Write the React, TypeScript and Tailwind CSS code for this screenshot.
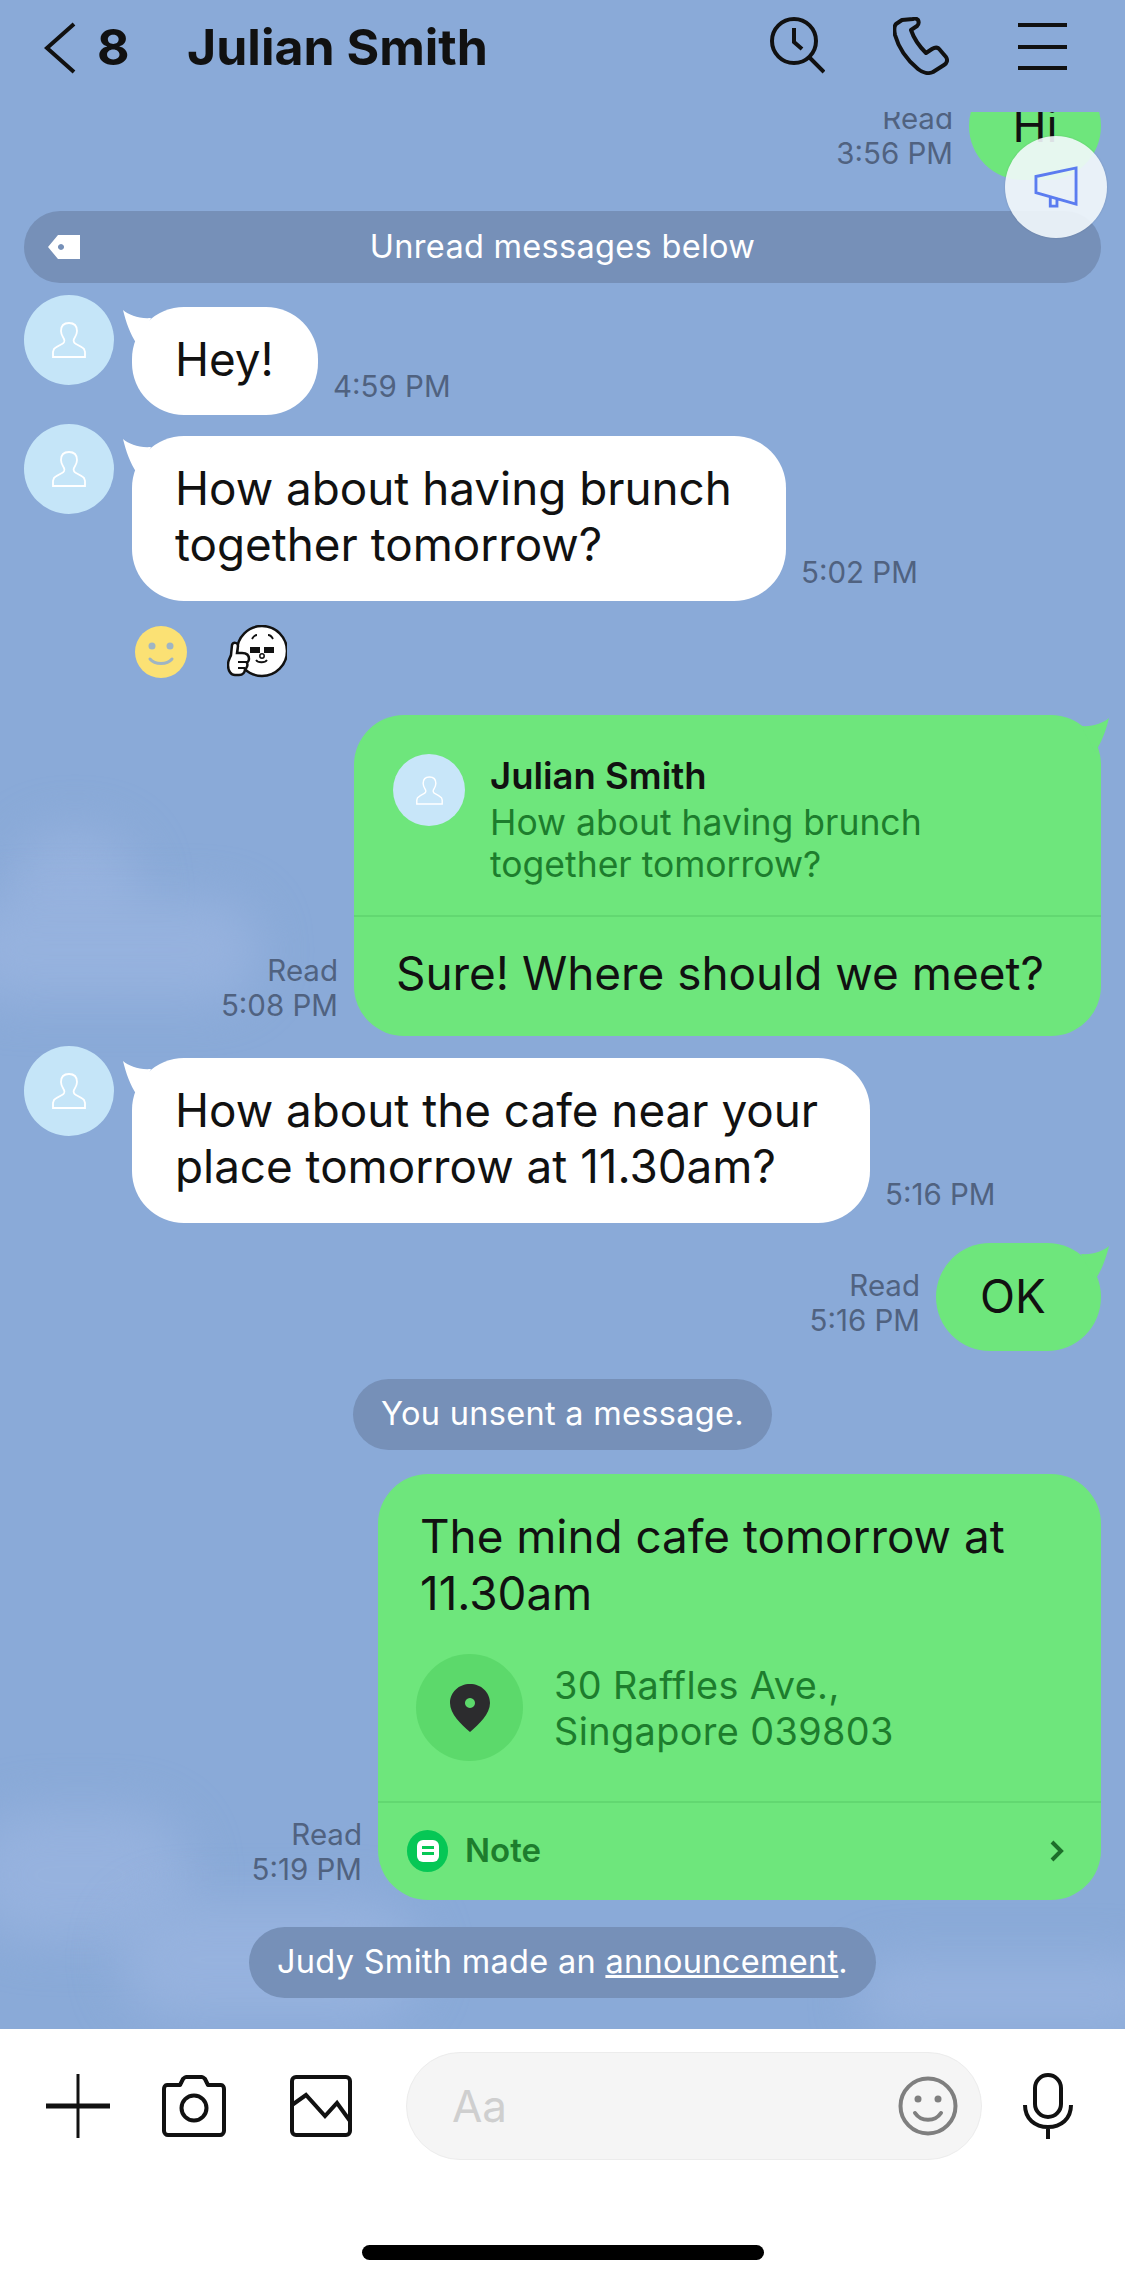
const Avatar = ({ small }: { small?: boolean }) => (
  <div className={small ? "w-[72px] h-[72px] rounded-full bg-[#c8e6f9] flex items-center justify-center shrink-0" : "w-[90px] h-[90px] rounded-full bg-[#c5e5f8] flex items-center justify-center shrink-0"}>
    <svg viewBox="0 0 34 36" className={small ? "w-[27px] h-[29px]" : "w-[34px] h-[36px]"} fill="none" stroke="#fff" strokeWidth="1.800">
      <path d="M17 1c-5 0-8 3-8 8 0 4 2 6 3 8 1 2 0 4-2 5-3 1.500-6 3-8 5l-1 3v5h32v-5l-1-3c-2-2-5-3.500-8-5-2-1-3-3-2-5 1-2 3-4 3-8 0-5-3-8-8-8z" />
    </svg>
  </div>
)

const TailLeft = () => (
  <svg viewBox="0 0 30 34" className="absolute left-[-9px] top-[3px] w-[30px] h-[34px]" fill="#fff">
    <path d="M0 0 C6 5 16 9 28 8 L14 34 C7 24 3 12 0 0z" />
  </svg>
)

const TailRight = () => (
  <svg viewBox="0 0 30 34" className="absolute right-[-8px] top-[3px] w-[30px] h-[34px]" fill="#6ee67c">
    <path d="M30 0 C24 5 14 9 2 8 L16 34 C23 24 27 12 30 0z" />
  </svg>
)

const Incoming = ({ lines, time, width, height, className }: { lines: string[]; time: string; width: string; height: string; className: string }) => (
  <div className={`flex items-start pl-[24px] ${className}`}>
    <Avatar />
    <div className={`relative mt-[12px] ml-[18px] bg-white rounded-[52px] pl-[43px] pb-[3px] flex flex-col justify-center text-[45.800px] leading-[56px] text-[#111] ${width} ${height}`}>
      <TailLeft />
      {lines.map((l) => (
        <div key={l} className="whitespace-nowrap">{l}</div>
      ))}
    </div>
    <span className="ml-[15px] mb-[12px] self-end text-[29.500px] leading-[34px] text-[#506280] whitespace-nowrap">{time}</span>
  </div>
)

const ReadTime = ({ time }: { time: string }) => (
  <div className="text-right text-[29.500px] leading-[35px] text-[#506280] mr-[16px] whitespace-nowrap">
    <div>Read</div>
    <div>{time}</div>
  </div>
)

const SystemPill = ({ children, className }: { children: React.ReactNode; className: string }) => (
  <div className={`flex justify-center ${className}`}>
    <div className="h-[71px] px-[28px] rounded-full bg-[#7690b8] flex items-center text-[32.500px] tracking-[0.3px] text-white whitespace-nowrap">
      {children}
    </div>
  </div>
)

const Sticker = () => (
  <svg viewBox="0 0 60 54" className="w-[60px] h-[54px] ml-[40px]">
    <circle cx="35" cy="26" r="25" fill="#fff" stroke="#111" strokeWidth="2.500" />
    <path d="M5 20c1-3 6-3 6 1l-1 7h5c4 0 7 2 7 6 0 2-1 3-2 4 1 2 0 5-2 6 0 3-2 6-6 6H8c-4 0-7-4-7-10 0-5 2-7 3-10z" fill="#fff" stroke="#111" strokeWidth="2.500" />
    <path d="M11 37h9M11 43h7" stroke="#111" strokeWidth="1.800" />
    <rect x="23" y="22" width="10" height="6" fill="#111" />
    <rect x="37" y="22" width="10" height="6" fill="#111" />
    <path d="M25 14c1-2 3-4 5-4M41 10c2 0 4 2 5 4" stroke="#111" strokeWidth="1.800" fill="none" />
    <path d="M29 35c2 3 9 3 11 0" stroke="#111" strokeWidth="1.800" fill="none" />
    <circle cx="35" cy="31" r="2.200" fill="none" stroke="#111" strokeWidth="1.500" />
  </svg>
)

const Cloud = ({ className }: { className: string }) => (
  <div className={`absolute rounded-full bg-[#96b2de] blur-[24px] ${className}`} />
)

export default function App() {
  return (
    <div className="relative w-[1125px] h-[2284px] bg-[#8aaad8] overflow-hidden [font-family:Inter,sans-serif] flex flex-col">
      <Cloud className="left-[10px] top-[830px] w-[130px] h-[120px]" />
      <Cloud className="left-[-40px] top-[900px] w-[300px] h-[100px]" />
      <Cloud className="left-[-30px] top-[1810px] w-[220px] h-[130px]" />
      <Cloud className="left-[120px] top-[1900px] w-[300px] h-[120px]" />
      <Cloud className="left-[860px] top-[1960px] w-[300px] h-[70px]" />

      {/* header */}
      <div className="relative h-[112px] shrink-0 flex items-center text-[#111]">
        <svg viewBox="0 0 32 52" className="absolute left-[44px] top-[22px] w-[32px] h-[52px]" fill="none" stroke="#111" strokeWidth="4">
          <path d="M30 2 3 26l27 24" />
        </svg>
        <span className="absolute left-[97px] top-[18px] text-[50px] leading-[58px] font-bold">8</span>
        <span className="absolute left-[187px] top-[18px] text-[50px] leading-[58px] font-bold">Julian Smith</span>
        <svg viewBox="0 0 56 58" className="absolute left-[769px] top-[16px] w-[56px] h-[58px]" fill="none" stroke="#111" strokeWidth="4">
          <circle cx="25" cy="25" r="22" />
          <path d="M25 12v14l8 7M40 41l15 15" />
        </svg>
        <svg viewBox="0 0 58 58" className="absolute left-[893px] top-[17px] w-[58px] h-[58px]" fill="none" stroke="#111" strokeWidth="4" strokeLinejoin="round">
          <path d="M9 3 3 7c-2 2-2 6-1 11 4 14 12 25 23 34 5 4 11 5 15 3l11-7c3-2 4-5 2-8l-6-7c-2-3-5-3-8-1l-6 4C27 30 21 22 18 13l6-4c2-2 2-4 1-6-1-1-3-2-5-1z" />
        </svg>
        <div className="absolute left-[1018px] top-[23px] w-[49px] h-[47px] flex flex-col justify-between">
          <div className="h-[4px] bg-[#111]" />
          <div className="h-[4px] bg-[#111]" />
          <div className="h-[4px] bg-[#111]" />
        </div>
      </div>

      {/* messages */}
      <div className="relative h-[1917px] shrink-0 overflow-hidden">
        <div className="flex justify-end items-end pr-[24px] mt-[-40px]">
          <div className="mb-[9px]"><ReadTime time="3:56 PM" /></div>
          <div className="relative h-[108px] w-[132px] rounded-[54px] bg-[#6ee67c] flex items-center justify-center text-[45.800px] text-[#111]">Hi</div>
        </div>

        <div className="relative mt-[31px] mx-[24px] h-[72px] rounded-full bg-[#7690b8] flex items-center justify-center text-[32.500px] tracking-[0.3px] text-white">
          <svg viewBox="0 0 32 24" className="absolute left-[24px] top-[24px] w-[32px] h-[24px]">
            <path fillRule="evenodd" d="M10 0h22v24H10L0 12zM13 9a3 3 0 1 0 .01 0z" fill="#fff" />
          </svg>
          Unread messages below
        </div>

        <Incoming className="mt-[12px]" lines={["Hey!"]} time="4:59 PM" width="w-[186px]" height="h-[108px]" />
        <Incoming className="mt-[9px]" lines={["How about having brunch", "together tomorrow?"]} time="5:02 PM" width="w-[654px]" height="h-[165px]" />

        <div className="flex items-center pl-[135px] mt-[24px]">
          <svg viewBox="0 0 52 52" className="w-[52px] h-[52px]">
            <circle cx="26" cy="26" r="26" fill="#fbe174" />
            <circle cx="17" cy="20" r="3.500" fill="#9fb5c4" />
            <circle cx="35" cy="20" r="3.500" fill="#9fb5c4" />
            <path d="M15 33c5 6 17 6 22 0" fill="none" stroke="#9fb5c4" strokeWidth="3" strokeLinecap="round" />
          </svg>
          <Sticker />
        </div>

        {/* reply */}
        <div className="flex justify-end items-end pr-[24px] mt-[36px]">
          <div className="mb-[13px]"><ReadTime time="5:08 PM" /></div>
          <div className="relative w-[747px] h-[321px] rounded-[50px] bg-[#6ee67c] flex flex-col">
            <TailRight />
            <div className="h-[202px] flex pl-[39px] pt-[39px] border-b-2 border-[#62d871]">
              <Avatar small />
              <div className="ml-[25px]">
                <div className="text-[36.500px] leading-[44px] font-semibold text-[#111]">Julian Smith</div>
                <div className="mt-[4px] text-[35.500px] leading-[42px] text-[#1d7d2d]">How about having brunch<br />together tomorrow?</div>
              </div>
            </div>
            <div className="flex-1 flex items-center pl-[42px] pb-[5px] text-[45.900px] text-[#111] whitespace-nowrap">Sure! Where should we meet?</div>
          </div>
        </div>

        <Incoming className="mt-[10px]" lines={["How about the cafe near your", "place tomorrow at 11.30am?"]} time="5:16 PM" width="w-[738px]" height="h-[165px]" />

        <div className="flex justify-end items-end pr-[24px] mt-[20px]">
          <div className="mb-[13px]"><ReadTime time="5:16 PM" /></div>
          <div className="relative w-[165px] h-[108px] rounded-[54px] bg-[#6ee67c] flex items-center justify-center pr-[11px] text-[45.800px] text-[#111]">
            <TailRight />
            OK
          </div>
        </div>

        <SystemPill className="mt-[28px]">You unsent a message.</SystemPill>

        {/* note card */}
        <div className="flex justify-end items-end pr-[24px] mt-[24px]">
          <div className="mb-[13px]"><ReadTime time="5:19 PM" /></div>
          <div className="w-[723px] h-[426px] rounded-[50px] bg-[#6ee67c] flex flex-col">
            <div className="h-[329px] border-b-2 border-[#62d871]">
              <div className="pl-[42px] pt-[34px] text-[45.800px] leading-[57px] text-[#111]">The mind cafe tomorrow at<br />11.30am</div>
              <div className="flex items-center pl-[38px] mt-[32px]">
                <div className="w-[107px] h-[107px] rounded-full bg-[#5cd96b] flex items-center justify-center">
                  <svg viewBox="0 0 40 48" className="w-[40px] h-[48px]">
                    <path fillRule="evenodd" d="M20 0C9 0 0 8 0 19c0 11 11 21 20 29 9-8 20-18 20-29C40 8 31 0 20 0zm0 14a5 5 0 1 1-.01 0z" fill="#2c2c2e" />
                  </svg>
                </div>
                <div className="ml-[31px] text-[37.800px] leading-[46px] tracking-[0.4px] text-[#1d7d2d]">30 Raffles Ave.,<br />Singapore 039803</div>
              </div>
            </div>
            <div className="flex-1 flex items-center pl-[29px] pr-[36px] pb-[2px]">
              <div className="w-[41px] h-[42px] rounded-full bg-[#06c755] flex items-center justify-center">
                <div className="w-[22px] h-[22px] rounded-[6px] bg-white flex flex-col items-center justify-center gap-[3px]">
                  <div className="w-[12px] h-[3px] bg-[#06c755]" />
                  <div className="w-[12px] h-[3px] bg-[#06c755]" />
                </div>
              </div>
              <span className="ml-[17px] text-[33px] font-semibold text-[#1d7d2d]">Note</span>
              <svg viewBox="0 0 16 22" className="ml-auto w-[16px] h-[22px]" fill="none" stroke="#1d6e2a" strokeWidth="4">
                <path d="m3 2 9 9-9 9" />
              </svg>
            </div>
          </div>
        </div>

        <SystemPill className="mt-[27px]">
          <span>Judy Smith made an <span className="underline">announcement</span>.</span>
        </SystemPill>

        {/* announcement button */}
        <div className="absolute right-[18px] top-[24px] w-[102px] h-[102px] rounded-full bg-[#f3f8fc]/90 flex items-center justify-center shadow-[0_0_2px_rgba(0,0,0,0.15)]">
          <svg viewBox="0 0 46 44" className="w-[44px] h-[42px]" fill="none" stroke="#5b7cf0" strokeWidth="3">
            <path d="M2 11 44 2v38L2 28zM17 31v11h7v-9" />
          </svg>
        </div>
      </div>

      {/* input bar */}
      <div className="relative flex-1 bg-white">
        <div className="flex items-center h-[154px] pl-[46px]">
          <svg viewBox="0 0 64 64" className="w-[64px] h-[64px]" stroke="#111">
            <path d="M32 0v64" strokeWidth="3" />
            <path d="M0 32h64" strokeWidth="5" />
          </svg>
          <svg viewBox="0 0 64 62" className="ml-[52px] w-[64px] h-[62px]" fill="none" stroke="#111" strokeWidth="4" strokeLinejoin="round">
            <path d="M5 10h13l3-6c1-1 2-2 3-2h16c1 0 2 1 3 2l3 6h13c2 0 3 2 3 4v42c0 2-2 4-4 4H6c-2 0-4-2-4-4V14c0-2 1-4 3-4z" />
            <circle cx="32" cy="33" r="12.500" />
          </svg>
          <svg viewBox="0 0 62 62" className="ml-[64px] w-[62px] h-[62px]" fill="none" stroke="#111" strokeWidth="4">
            <rect x="2" y="2" width="58" height="58" rx="4" />
            <path d="M2 30 16 20l19 21 12-13 13 18" strokeLinejoin="miter" />
          </svg>
          <div className="ml-[54px] w-[576px] h-[108px] rounded-full bg-[#f5f5f5] border border-[#ececec] flex items-center pl-[45px] pr-[23px] text-[44px] text-[#cfcfcf]">
            Aa
            <svg viewBox="0 0 60 60" className="ml-auto w-[60px] h-[60px]" fill="none" stroke="#7f7f7f" strokeWidth="4">
              <circle cx="30" cy="30" r="27.500" />
              <circle cx="20" cy="23" r="3.500" fill="#7f7f7f" stroke="none" />
              <circle cx="40" cy="23" r="3.500" fill="#7f7f7f" stroke="none" />
              <path d="M17 37c6 9 20 9 26 0" strokeLinecap="round" />
            </svg>
          </div>
          <svg viewBox="0 0 50 66" className="ml-[41px] w-[50px] h-[66px]" fill="none" stroke="#111" strokeWidth="4">
            <rect x="12" y="2" width="26" height="42" rx="13" />
            <path d="M2 32c0 14 10 22 23 22s23-8 23-22M25 54v12" />
          </svg>
        </div>
        <div className="absolute left-[362px] top-[216px] w-[402px] h-[15px] rounded-full bg-black" />
      </div>
    </div>
  )
}
